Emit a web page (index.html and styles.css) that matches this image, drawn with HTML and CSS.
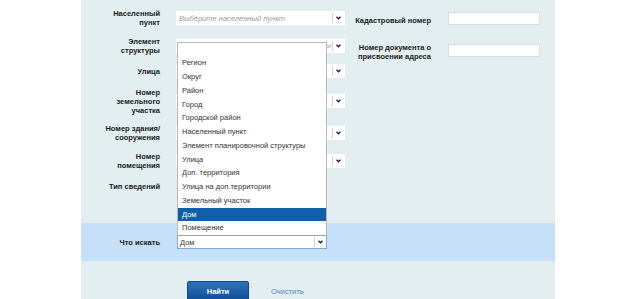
FILE: index.html
```html
<!DOCTYPE html>
<html lang="ru">
<head>
  <meta charset="UTF-8">
  <title>Поиск объекта</title>
  <link rel="stylesheet" href="styles.css">
</head>
<body>
  <div class="panel">
    <!-- Fields -->
    <div class="fields">
      <div class="col-left">
        <div class="row">
          <label class="lbl">Населенный<br>пункт</label>
          <div class="select"><span class="val placeholder">Выберите населенный пункт</span><span class="arrow"><svg width="5" height="4" viewBox="0 0 5 4"><path d="M0.5 0.8 L2.5 2.8 L4.5 0.8" fill="none" stroke="#222" stroke-width="1.3"/></svg></span></div>
        </div>
        <div class="row">
          <label class="lbl">Элемент<br>структуры</label>
          <div class="select"><span class="val placeholder tail">Выберите элемент структуры</span><span class="arrow"><svg width="5" height="4" viewBox="0 0 5 4"><path d="M0.5 0.8 L2.5 2.8 L4.5 0.8" fill="none" stroke="#222" stroke-width="1.3"/></svg></span></div>
        </div>
        <div class="row">
          <label class="lbl">Улица</label>
          <div class="select"><span class="val"></span><span class="arrow"><svg width="5" height="4" viewBox="0 0 5 4"><path d="M0.5 0.8 L2.5 2.8 L4.5 0.8" fill="none" stroke="#222" stroke-width="1.3"/></svg></span></div>
        </div>
        <div class="row">
          <label class="lbl">Номер<br>земельного<br>участка</label>
          <div class="select"><span class="val"></span><span class="arrow"><svg width="5" height="4" viewBox="0 0 5 4"><path d="M0.5 0.8 L2.5 2.8 L4.5 0.8" fill="none" stroke="#222" stroke-width="1.3"/></svg></span></div>
        </div>
        <div class="row">
          <label class="lbl">Номер здания/<br>сооружения</label>
          <div class="select"><span class="val"></span><span class="arrow"><svg width="5" height="4" viewBox="0 0 5 4"><path d="M0.5 0.8 L2.5 2.8 L4.5 0.8" fill="none" stroke="#222" stroke-width="1.3"/></svg></span></div>
        </div>
        <div class="row">
          <label class="lbl">Номер<br>помещения</label>
          <div class="select"><span class="val"></span><span class="arrow"><svg width="5" height="4" viewBox="0 0 5 4"><path d="M0.5 0.8 L2.5 2.8 L4.5 0.8" fill="none" stroke="#222" stroke-width="1.3"/></svg></span></div>
        </div>
        <div class="row">
          <label class="lbl">Тип сведений</label>
          <div class="blank"></div>
        </div>
      </div>

      <div class="col-right">
        <div class="row-r">
          <label class="lbl">Кадастровый номер</label>
          <input class="input" type="text">
        </div>
        <div class="row-r">
          <label class="lbl">Номер документа о<br>присвоении адреса</label>
          <input class="input" type="text">
        </div>
      </div>
    </div>

    <!-- What to search -->
    <div class="band">
      <label class="lbl">Что искать</label>
      <div class="select short focus">
        <span class="val">Дом</span>
        <span class="arrow"><svg width="5" height="4" viewBox="0 0 5 4"><path d="M0.5 0.8 L2.5 2.8 L4.5 0.8" fill="none" stroke="#222" stroke-width="1.3"/></svg></span>
        <ul class="options">
          <li>&nbsp;</li>
          <li>Регион</li>
          <li>Округ</li>
          <li>Район</li>
          <li>Город</li>
          <li>Городской район</li>
          <li>Населенный пункт</li>
          <li>Элемент планировочной структуры</li>
          <li>Улица</li>
          <li>Доп. территория</li>
          <li>Улица на доп.территории</li>
          <li>Земельный участок</li>
          <li class="active">Дом</li>
          <li>Помещение</li>
        </ul>
      </div>
    </div>

    <!-- Buttons -->
    <div class="actions">
      <button class="btn">Найти</button>
      <a class="link" href="#">Очистить</a>
    </div>
  </div>
</body>
</html>
```

FILE: styles.css
```css
body {
  margin: 0;
  background: #fff;
  font-family: "Liberation Sans", Arial, sans-serif;
  color: #1a1a1a;
}
.panel {
  margin-left: 81px;
  width: 474px;
  height: 299px;
  overflow: hidden;
  background: #e3eef1;
}
.fields {
  display: flex;
  padding: 9px 0 30px;
}
.col-left {
  display: flex;
  flex-direction: column;
  gap: 9.5px;
  width: 274px;
}
.row {
  display: grid;
  grid-template-columns: 79px 169px;
  column-gap: 16px;
  align-items: center;
}
.lbl {
  font-size: 7.5px;
  font-weight: bold;
  line-height: 9px;
  text-align: right;
}
.select {
  position: relative;
  display: flex;
  align-items: center;
  height: 14px;
  background: #fff;
  border: 1px solid #fff;
  box-sizing: border-box;
  font-size: 7.5px;
}
.select .val {
  flex: 1;
  padding-left: 2px;
  white-space: nowrap;
  overflow: hidden;
  color: #333;
}
.select .tail {
  text-align: right;
  padding-right: 1px;
}
.placeholder {
  font-style: italic;
  color: #9a9a9a !important;
}
.arrow {
  width: 11px;
  height: 10px;
  border-left: 1px solid #d4d4d4;
  display: flex;
  align-items: center;
  justify-content: center;
}
.blank {
  height: 14px;
}
.col-right {
  display: flex;
  flex-direction: column;
  gap: 12px;
  width: 185px;
}
.row-r {
  display: grid;
  grid-template-columns: 76px 92px;
  column-gap: 17px;
  align-items: center;
  min-height: 18px;
}
.row-r .lbl {
  padding-top: 4px;
}
.input {
  height: 13px;
  border: 1px solid #d6e0e4;
  background: #fff;
  box-sizing: border-box;
  margin: 0;
  padding: 0;
}
.band {
  display: grid;
  grid-template-columns: 79px 149px;
  column-gap: 17px;
  align-items: center;
  height: 38px;
  background: #c5e0f8;
}
.select.short {
  width: 150px;
}
.select.focus {
  border-color: #7fa9d6;
}
.options {
  position: absolute;
  left: -1px;
  bottom: calc(100% + 1px);
  width: 150px;
  margin: 0;
  padding: 0;
  list-style: none;
  background: #fff;
  border: 1px solid #b9b9b9;
  border-bottom: none;
  box-sizing: border-box;
}
.options li {
  height: 13.75px;
  line-height: 13.75px;
  padding-left: 4px;
  font-size: 7.5px;
  color: #333;
  white-space: nowrap;
}
.options li.active {
  background: #0f5faa;
  color: #fff;
}
.actions {
  display: flex;
  align-items: center;
  gap: 22px;
  padding: 20px 0 0 106px;
}
.btn {
  width: 62px;
  height: 20px;
  border: 1px solid #0d4a8f;
  border-radius: 2px;
  background: linear-gradient(#2f72bb, #0e4f98);
  color: #fff;
  font-family: "Liberation Sans", Arial, sans-serif;
  font-size: 7.5px;
  font-weight: bold;
  padding: 0;
}
.link {
  color: #4a86c5;
  font-size: 7.5px;
  text-decoration: none;
}
```
